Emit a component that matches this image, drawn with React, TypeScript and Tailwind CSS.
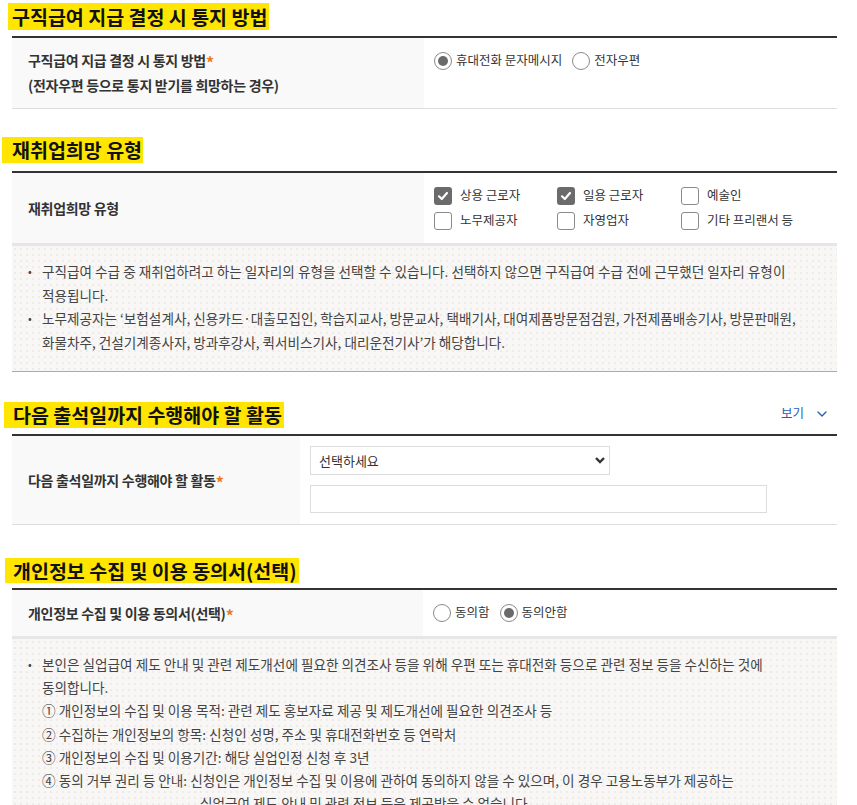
import { ChevronDown } from 'lucide-react';

const bodyFont = "font-['Noto_Sans_CJK_KR','Noto_Sans',sans-serif]";

function Required() {
  return <span className="relative top-[3px] text-[16px] leading-none font-bold text-[#f07a1a]">*</span>;
}

function Radio({ label, checked }: { label: string; checked?: boolean }) {
  return (
    <label className="inline-flex items-center mr-[10px] text-[12.5px] text-[#333]">
      <span className="w-[18px] h-[18px] rounded-full border border-[#8a8a8a] bg-white flex items-center justify-center">
        {checked && <span className="w-[10px] h-[10px] rounded-full bg-[#6a6a6a]" />}
      </span>
      <span className="ml-[4px]">{label}</span>
    </label>
  );
}

function Checkbox({ label, checked }: { label: string; checked?: boolean }) {
  return (
    <label className="flex items-center h-[25px] text-[12.5px] text-[#333]">
      {checked ? (
        <span className="w-[18px] h-[18px] rounded-[3px] bg-[#6b6b6b] flex items-center justify-center">
          <svg width="12" height="12" viewBox="0 0 12 12">
            <path d="M2 6.3 L4.8 9 L10 3" fill="none" stroke="#fff" strokeWidth="2.2" strokeLinecap="round" strokeLinejoin="round" />
          </svg>
        </span>
      ) : (
        <span className="w-[18px] h-[18px] rounded-[3px] border border-[#8a8a8a] bg-white" />
      )}
      <span className="ml-[8px]">{label}</span>
    </label>
  );
}

function Bullet({ children }: { children: React.ReactNode }) {
  return (
    <li className="flex">
      <span className="w-[14px] shrink-0 text-[11px]">•</span>
      <div className="flex-1">{children}</div>
    </li>
  );
}

export default function App() {
  return (
    <div className={`${bodyFont} w-[857px] bg-white text-[#333] pb-6`}>
      {/* 구직급여 지급 결정 시 통지 방법 */}
      <div className="pt-[3px]">
        <h2 className="ml-[8px] inline-block h-[27px] leading-[27px] bg-[#ffe500] pl-[4px] pr-[2px] text-[19.5px] font-bold text-[#111]">
          구직급여 지급 결정 시 통지 방법
        </h2>
      </div>
      <div className="ml-[12px] w-[825px] mt-[6px] border-t-2 border-t-[#333] border-b border-b-[#ddd] flex">
        <div className="w-[412px] bg-[#f9f9f9] pl-[16px] py-[10px] flex flex-col justify-center text-[14px] leading-[25px] font-semibold tracking-[-0.3px]">
          <p>구직급여 지급 결정 시 통지 방법<Required /></p>
          <p>(전자우편 등으로 통지 받기를 희망하는 경우)</p>
        </div>
        <div className="flex-1 pl-[10px] pt-[10px]">
          <div className="flex items-center h-[25px]">
            <Radio label="휴대전화 문자메시지" checked />
            <Radio label="전자우편" />
          </div>
        </div>
      </div>

      {/* 재취업희망 유형 */}
      <div className="mt-[28px]">
        <h2 className="ml-[2px] inline-block h-[26px] leading-[26px] bg-[#ffe500] pl-[10px] pr-[1px] text-[19.5px] font-bold text-[#111]">
          재취업희망 유형
        </h2>
      </div>
      <div className="ml-[12px] w-[825px] mt-[8px] border-t-2 border-t-[#333]">
        <div className="flex border-b-[3px] border-b-[#e6e6e6]">
          <div className="w-[412px] bg-[#f9f9f9] pl-[16px] flex items-center text-[14px] font-semibold tracking-[-0.3px]">
            재취업희망 유형
          </div>
          <div className="flex-1 pl-[10px] pt-[10px] pb-[10px] grid grid-cols-[123px_124px_auto]">
            <Checkbox label="상용 근로자" checked />
            <Checkbox label="일용 근로자" checked />
            <Checkbox label="예술인" />
            <Checkbox label="노무제공자" />
            <Checkbox label="자영업자" />
            <Checkbox label="기타 프리랜서 등" />
          </div>
        </div>
        <ul className="h-[126px] break-keep border-b border-b-[#aaa] bg-[#f8f7f5] bg-[radial-gradient(circle,#eeece8_0.8px,transparent_1.2px)] bg-[length:6px_6px] pl-[16px] pr-[37px] pt-[14px] text-[13.6px] leading-[23.7px] text-[#444]">
          <Bullet>
            구직급여 수급 중 재취업하려고 하는 일자리의 유형을 선택할 수 있습니다. 선택하지 않으면 구직급여 수급 전에 근무했던 일자리 유형이 적용됩니다.
          </Bullet>
          <Bullet>
            노무제공자는 ‘보험설계사, 신용카드·대출모집인, 학습지교사, 방문교사, 택배기사, 대여제품방문점검원, 가전제품배송기사, 방문판매원, 화물차주, 건설기계종사자, 방과후강사, 퀵서비스기사, 대리운전기사’가 해당합니다.
          </Bullet>
        </ul>
      </div>

      {/* 다음 출석일까지 수행해야 할 활동 */}
      <div className="mt-[30px] flex items-start justify-between pr-[27px]">
        <h2 className="ml-[4px] inline-block h-[26px] leading-[26px] bg-[#ffe500] pl-[9px] pr-[2px] text-[19.5px] font-bold text-[#111]">
          다음 출석일까지 수행해야 할 활동
        </h2>
        <button className="mt-[2px] flex items-center text-[12.5px] leading-[16px] text-[#2a5db0]">
          보기
          <ChevronDown className="ml-[10px] mt-[2px] w-[16px] h-[16px]" strokeWidth={2} />
        </button>
      </div>
      <div className="ml-[12px] w-[825px] mt-[6px] border-t-2 border-t-[#333] border-b border-b-[#ddd] flex">
        <div className="w-[288px] bg-[#f9f9f9] pl-[16px] flex items-center text-[14px] font-semibold tracking-[-0.3px]">
          <p>다음 출석일까지 수행해야 할 활동<Required /></p>
        </div>
        <div className="flex-1 pl-[10px] pt-[10px] pb-[11px] flex flex-col gap-[10px]">
          <div className="relative w-[300px]">
            <select className="w-full h-[29px] appearance-none border border-[#dcdcdc] bg-white pl-[8px] text-[13px] text-[#333] outline-none">
              <option>선택하세요</option>
            </select>
            <svg className="absolute right-[4px] top-[10px] pointer-events-none" width="12" height="9" viewBox="0 0 12 9">
              <path d="M2 2 L6 6 L10 2" fill="none" stroke="#333" strokeWidth="2.4" />
            </svg>
          </div>
          <input className="w-[457px] h-[28px] border border-[#dcdcdc] bg-white outline-none" />
        </div>
      </div>

      {/* 개인정보 수집 및 이용 동의서(선택) */}
      <div className="mt-[33px]">
        <h2 className="ml-[5px] inline-block h-[25px] leading-[25px] bg-[#ffe500] pl-[8px] pr-[2px] text-[19.5px] font-bold text-[#111]">
          개인정보 수집 및 이용 동의서(선택)
        </h2>
      </div>
      <div className="ml-[12px] w-[825px] mt-[4px] border-t-2 border-t-[#333]">
        <div className="flex border-b-[3px] border-b-[#e6e6e6]">
          <div className="w-[411px] bg-[#f9f9f9] pl-[16px] flex items-center text-[14px] font-semibold tracking-[-0.3px]">
            <p>개인정보 수집 및 이용 동의서(선택)<Required /></p>
          </div>
          <div className="flex-1 pl-[10px] pt-[10px] pb-[11px]">
            <div className="flex items-center h-[25px]">
              <Radio label="동의함" />
              <Radio label="동의안함" checked />
            </div>
          </div>
        </div>
        <ul className="break-keep border-b border-b-[#aaa] bg-[#f8f7f5] bg-[radial-gradient(circle,#eeece8_0.8px,transparent_1.2px)] bg-[length:6px_6px] pl-[16px] pr-[37px] pt-[14px] pb-[18px] text-[13.6px] leading-[23.2px] text-[#444]">
          <Bullet>
            <p>본인은 실업급여 제도 안내 및 관련 제도개선에 필요한 의견조사 등을 위해 우편 또는 휴대전화 등으로 관련 정보 등을 수신하는 것에 동의합니다.</p>
            <p>① 개인정보의 수집 및 이용 목적: 관련 제도 홍보자료 제공 및 제도개선에 필요한 의견조사 등</p>
            <p>② 수집하는 개인정보의 항목: 신청인 성명, 주소 및 휴대전화번호 등 연락처</p>
            <p>③ 개인정보의 수집 및 이용기간: 해당 실업인정 신청 후 3년</p>
            <p>④ 동의 거부 권리 등 안내: 신청인은 개인정보 수집 및 이용에 관하여 동의하지 않을 수 있으며, 이 경우 고용노동부가 제공하는</p>
            <p className="pl-[158px]">실업급여 제도 안내 및 관련 정보 등은 제공받을 수 없습니다.</p>
          </Bullet>
        </ul>
      </div>
    </div>
  );
}
